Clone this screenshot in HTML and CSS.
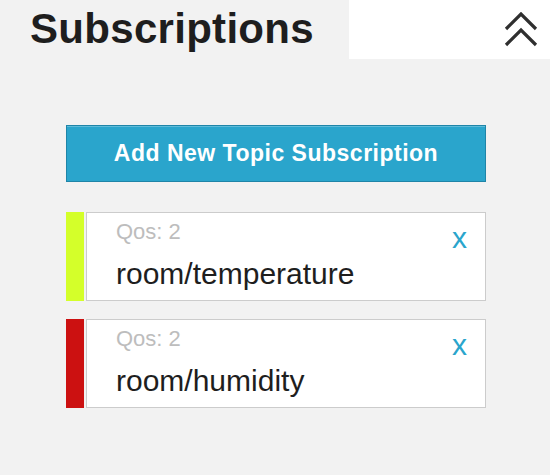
FILE: index.html
```html
<!DOCTYPE html>
<html>
<head>
<meta charset="utf-8">
<link rel="stylesheet" href="styles.css">
</head>
<body>
<div class="panel">
  <header class="panel-header">
    <h1 class="panel-title">Subscriptions</h1>
    <div class="collapse-box">
      <svg class="collapse-icon" width="34" height="36" viewBox="0 0 34 36">
        <path d="M2 17 L17 2 L32 17" />
        <path d="M2 33 L17 18 L32 33" />
      </svg>
    </div>
  </header>
  <main class="panel-body">
    <button class="add-btn">Add New Topic Subscription</button>
    <ul class="sub-list">
      <li class="sub-item">
        <span class="sub-color color-lime"></span>
        <div class="sub-card">
          <div class="sub-info">
            <div class="sub-qos">Qos: 2</div>
            <div class="sub-topic">room/temperature</div>
          </div>
          <span class="sub-remove">x</span>
        </div>
      </li>
      <li class="sub-item">
        <span class="sub-color color-red"></span>
        <div class="sub-card">
          <div class="sub-info">
            <div class="sub-qos">Qos: 2</div>
            <div class="sub-topic">room/humidity</div>
          </div>
          <span class="sub-remove">x</span>
        </div>
      </li>
    </ul>
  </main>
</div>
</body>
</html>
```

FILE: styles.css
```css
html, body {
  margin: 0;
  padding: 0;
  background: #f2f2f2;
  font-family: "Liberation Sans", Arial, sans-serif;
}

.panel {
  width: 550px;
  height: 475px;
  background: #f2f2f2;
}

.panel-header {
  display: flex;
  height: 59px;
}

.panel-title {
  flex: 1;
  margin: 0;
  padding-left: 30px;
  font-size: 42px;
  font-weight: bold;
  letter-spacing: 0.3px;
  line-height: 57px;
  color: #1e1e1e;
}

.collapse-box {
  width: 201px;
  background: #ffffff;
  display: flex;
  align-items: center;
  justify-content: flex-end;
  padding-right: 12px;
  box-sizing: border-box;
}

.collapse-icon path {
  fill: none;
  stroke: #2f2f2f;
  stroke-width: 3.2;
}

.panel-body {
  padding: 66px 64px 0 66px;
}

.add-btn {
  display: flex;
  align-items: center;
  justify-content: center;
  width: 100%;
  height: 57px;
  margin: 0;
  padding: 0;
  background: #2aa5cc;
  border: 1px solid #1f85a8;
  box-shadow: inset 0 1px 0 rgba(255, 255, 255, 0.25);
  color: #ffffff;
  font-family: "Liberation Sans", Arial, sans-serif;
  font-size: 23px;
  font-weight: bold;
  letter-spacing: 0.5px;
}

.sub-list {
  list-style: none;
  margin: 30px 0 0 0;
  padding: 0;
  display: flex;
  flex-direction: column;
  gap: 18px;
}

.sub-item {
  display: flex;
  gap: 2px;
  height: 89px;
}

.sub-color {
  width: 18px;
  flex: none;
}

.color-lime {
  background: #d4ff2a;
}

.color-red {
  background: #cc1111;
}

.sub-card {
  flex: 1;
  display: flex;
  align-items: flex-start;
  background: #ffffff;
  border: 1px solid #cccccc;
  padding: 6px 18px 0 29px;
}

.sub-info {
  flex: 1;
}

.sub-qos {
  font-size: 22px;
  line-height: 26px;
  color: #bdbdbd;
}

.sub-topic {
  margin-top: 11px;
  font-size: 30px;
  line-height: 36px;
  color: #1e1e1e;
}

.sub-remove {
  margin-top: 4px;
  font-size: 30px;
  line-height: 30px;
  color: #2aa5cc;
}
```
